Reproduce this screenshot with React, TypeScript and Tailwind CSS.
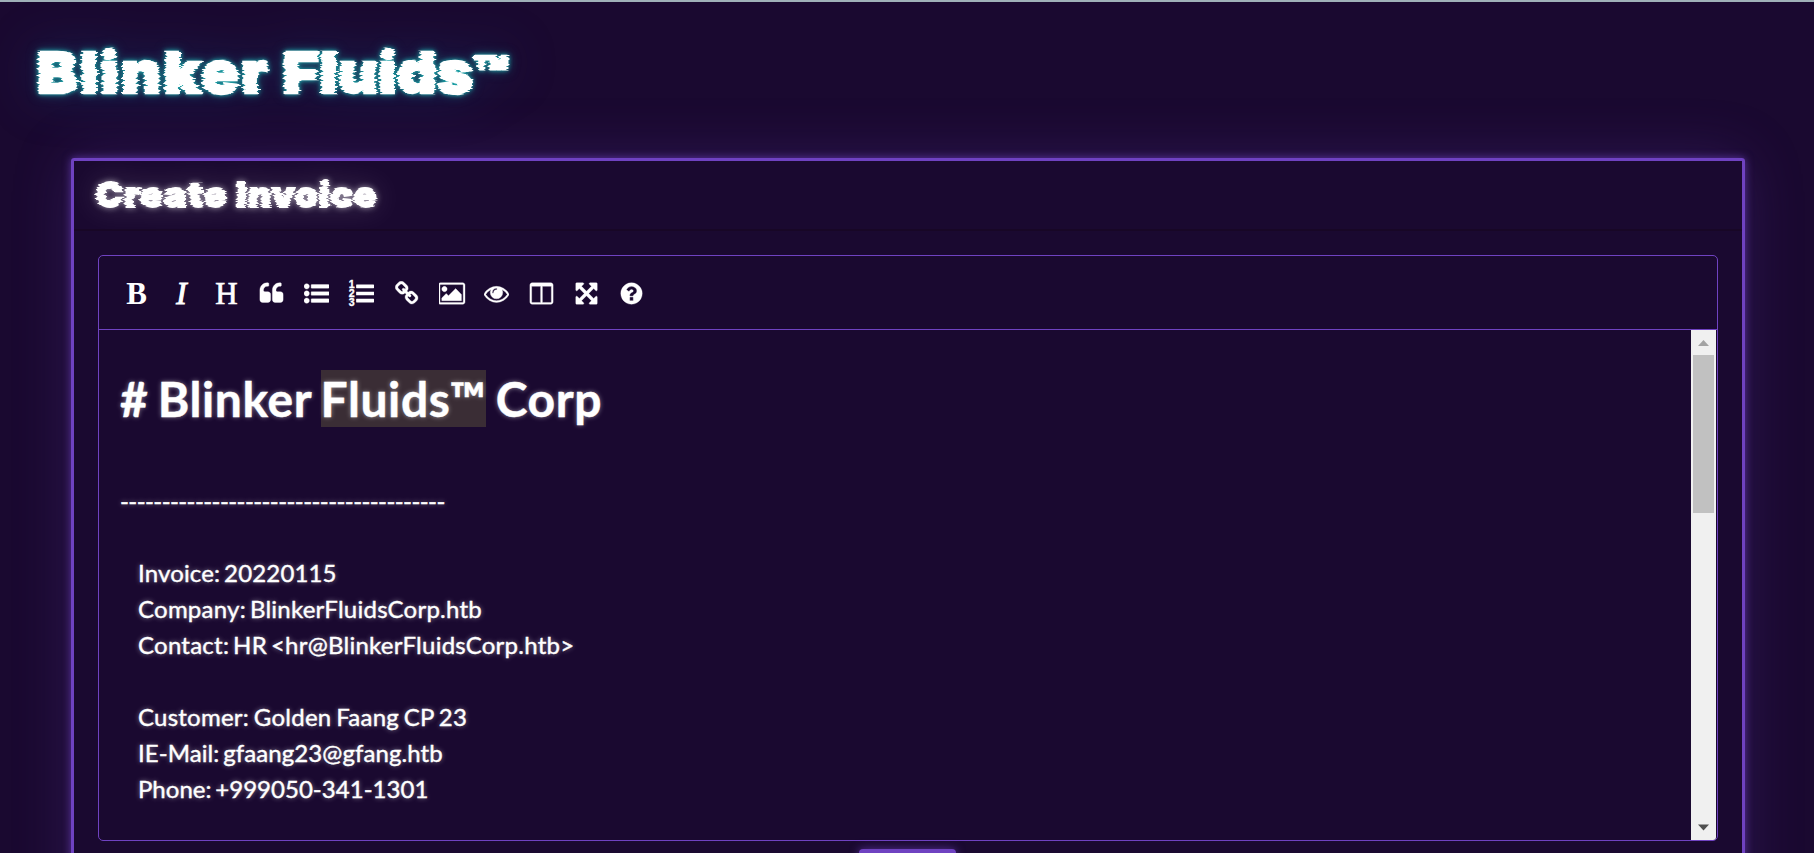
import type { ReactNode } from "react";

const BAR = "q0 13-9.5 22.5t-22.5 9.5h-1216q-13 0-22.5-9.5t-9.5-22.5v-192q0-13 9.5-22.5t22.5-9.5h1216q13 0 22.5 9.5t9.5 22.5z";
const DOT = "q0 80-56 136t-136 56-136-56-56-136 56-136 136-56 136 56 56 136z";
const BARS = `M1792 480${BAR}M1792 992${BAR}M1792 1504${BAR}`;

const PATHS = {
  quote: "M832 960v384q0 80-56 136t-136 56h-384q-80 0-136-56t-56-136v-704q0-104 40.5-198.5t109.5-163.5 163.5-109.5 198.5-40.5h64q26 0 45 19t19 45v128q0 26-19 45t-45 19h-64q-106 0-181 75t-75 181v32q0 40 28 68t68 28h224q80 0 136 56t56 136zm896 0v384q0 80-56 136t-136 56h-384q-80 0-136-56t-56-136v-704q0-104 40.5-198.5t109.5-163.5 163.5-109.5 198.5-40.5h64q26 0 45 19t19 45v128q0 26-19 45t-45 19h-64q-106 0-181 75t-75 181v32q0 40 28 68t68 28h224q80 0 136 56t56 136z",
  list: `M384 384${DOT}M384 896${DOT}M384 1408${DOT}${BARS}`,
  link: "M1456 1216q0-40-28-68l-208-208q-28-28-68-28-42 0-72 32 3 3 19 18.5t21.5 21.5 15 19 13 25.5 3.5 27.5q0 40-28 68t-68 28q-15 0-27.5-3.5t-25.5-13-19-15-21.5-21.5-18.5-19q-33 31-33 73 0 40 28 68l206 207q27 27 68 27 40 0 68-26l147-146q28-28 28-67zm-703-705q0-40-28-68l-206-207q-28-28-68-28-39 0-68 27l-147 146q-28 28-28 67 0 40 28 68l208 208q27 27 68 27 42 0 72-31-3-3-19-18.5t-21.5-21.5-15-19-13-25.5-3.5-27.5q0-40 28-68t68-28q15 0 27.5 3.5t25.5 13 19 15 21.5 21.5 18.5 19q33-31 33-73zm895 705q0 120-85 203l-147 146q-83 83-203 83-121 0-204-85l-206-207q-83-83-83-203 0-123 88-209l-88-88q-86 88-208 88-120 0-204-84l-208-208q-84-84-84-204t85-203l147-146q83-83 203-83 121 0 204 85l206 207q83 83 83 203 0 123-88 209l88 88q86-88 208-88 120 0 204 84l208 208q84 84 84 204z",
  image: "M576 576q0 80-56 136t-136 56-136-56-56-136 56-136 136-56 136 56 56 136zm1024 384v448h-1408v-192l320-320 160 160 512-512zm96-704h-1600q-13 0-22.5 9.5t-9.5 22.5v1216q0 13 9.5 22.5t22.5 9.5h1600q13 0 22.5-9.5t9.5-22.5v-1216q0-13-9.5-22.5t-22.5-9.5zm160 32v1216q0 66-47 113t-113 47h-1600q-66 0-113-47t-47-113v-1216q0-66 47-113t113-47h1600q66 0 113 47t47 113z",
  eye: "M1664 960q-152-236-381-353 61 104 61 225 0 185-131.5 316.5t-316.5 131.5-316.5-131.5-131.5-316.5q0-121 61-225-229 117-381 353 133 205 333.5 326.5t434.5 121.5 434.5-121.5 333.5-326.5zm-720-384q0-20-14-34t-34-14q-125 0-214.5 89.5t-89.5 214.5q0 20 14 34t34 14 34-14 14-34q0-86 61-147t147-61q20 0 34-14t14-34zm848 384q0 34-20 69-140 230-376.5 368.5t-499.5 138.5-499.5-139-376.5-368q-20-35-20-69t20-69q140-229 376.5-368t499.5-139 499.5 139 376.5 368q20 35 20 69z",
  columns: "M224 1536h608v-1152h-640v1120q0 13 9.5 22.5t22.5 9.5zm1376-32v-1120h-640v1152h608q13 0 22.5-9.5t9.5-22.5zm128-1216v1216q0 66-47 113t-113 47h-1344q-66 0-113-47t-47-113v-1216q0-66 47-113t113-47h1344q66 0 113 47t47 113z",
  expand: "M1411 541l-355 355 355 355 144-144q29-31 70-14 39 17 39 59v448q0 26-19 45t-45 19h-448q-42 0-59-40-17-39 14-69l144-144-355-355-355 355 144 144q31 30 14 69-17 40-59 40h-448q-26 0-45-19t-19-45v-448q0-42 40-59 39-17 69 14l144 144 355-355-355-355-144 144q-19 19-45 19-12 0-24-5-40-17-40-59v-448q0-26 19-45t45-19h448q42 0 59 40 17 39-14 69l-144 144 355 355 355-355-144-144q-31-30-14-69 17-40 59-40h448q26 0 45 19t19 45v448q0 42-39 59-13 5-25 5-26 0-45-19z",
  help: "M1024 1376v-192q0-14-9-23t-23-9h-192q-14 0-23 9t-9 23v192q0 14 9 23t23 9h192q14 0 23-9t9-23zm256-672q0-88-55.5-163t-138.5-116-170-41q-243 0-371 213-15 24 8 42l132 100q7 6 19 6 16 0 25-12 53-68 86-92 34-24 86-24 48 0 85.5 26t37.5 59q0 38-20 61t-68 45q-63 28-115.5 86.5t-52.5 125.5v36q0 14 9 23t23 9h192q14 0 23-9t9-23q0-19 21.5-49.5t54.5-49.5q32-18 49-28.5t46-35 44.5-48 28-60.5 12.5-81zm384 192q0 209-103 385.5t-279.5 279.5-385.5 103-385.5-103-279.5-279.5-103-385.5 103-385.5 279.5-279.5 385.5-103 385.5 103 279.5 279.5 103 385.5z",
};

function Icon({ d, wide }: { d: string; wide?: boolean }) {
  return (
    <svg viewBox={wide ? "0 0 1920 1792" : "0 0 1792 1792"} className={wide ? "ml-[2px] h-[25px] w-[27px]" : "size-[25px]"} fill="currentColor" stroke="currentColor" strokeWidth="24" fillRule="evenodd">
      <path d={d} />
    </svg>
  );
}

function Tool({ label, children }: { label: string; children: ReactNode }) {
  return (
    <button aria-label={label} className="flex h-[38px] w-[45px] items-center justify-center">
      {children}
    </button>
  );
}

function Toolbar() {
  return (
    <div className="flex h-[74px] items-center border-b border-[#6f42c1] pt-[2px] pl-[15px] text-white">
      <Tool label="Bold"><span className="font-['Liberation_Serif',serif] text-[31px] leading-none font-bold">B</span></Tool>
      <Tool label="Italic"><span className="font-['Liberation_Serif',serif] text-[31px] leading-none italic [-webkit-text-stroke:1.1px_white]">I</span></Tool>
      <Tool label="Heading"><span className="font-['Liberation_Serif',serif] text-[31px] leading-none [-webkit-text-stroke:0.7px_white]">H</span></Tool>
      <Tool label="Quote"><Icon d={PATHS.quote} /></Tool>
      <Tool label="Generic List"><Icon d={PATHS.list} /></Tool>
      <Tool label="Numbered List">
        <svg viewBox="0 0 1792 1792" className="size-[25px] overflow-visible" fill="currentColor">
          <path d={BARS} />
          <g className="font-['Liberation_Sans',sans-serif] text-[760px] font-bold" stroke="currentColor" strokeWidth="24">
            <text x="-20" y="470">1</text>
            <text x="-20" y="1140">2</text>
            <text x="-20" y="1800">3</text>
          </g>
        </svg>
      </Tool>
      <Tool label="Create Link"><span className="pl-[2px]"><Icon d={PATHS.link} /></span></Tool>
      <Tool label="Insert Image"><Icon d={PATHS.image} wide /></Tool>
      <Tool label="Toggle Preview"><Icon d={PATHS.eye} /></Tool>
      <Tool label="Toggle Side by Side"><Icon d={PATHS.columns} /></Tool>
      <Tool label="Toggle Fullscreen"><Icon d={PATHS.expand} /></Tool>
      <Tool label="Markdown Guide"><Icon d={PATHS.help} /></Tool>
    </div>
  );
}

function Scrollbar() {
  return (
    <div className="mr-px flex w-[25px] shrink-0 flex-col items-center rounded-br-[3px] bg-[#f0f0f0]">
      <svg viewBox="0 0 25 25" className="size-[25px] shrink-0"><path d="M12.5 10l5.5 6H7z" fill="#a3a3a3" /></svg>
      <div className="h-[158px] w-[21px] bg-[#c1c1c1]" />
      <svg viewBox="0 0 25 25" className="mt-auto size-[25px] shrink-0"><path d="M12.5 15.500l5.500-6H7z" fill="#505050" /></svg>
    </div>
  );
}

const INVOICE = [
  { text: "Invoice: 20220115", spacing: "tracking-[0.15px]" },
  { text: "Company: BlinkerFluidsCorp.htb", spacing: "tracking-[0.24px]" },
  { text: "Contact: HR <hr@BlinkerFluidsCorp.htb>", spacing: "tracking-[0.24px]" },
];
const CUSTOMER = [
  { text: "Customer: Golden Faang CP 23", spacing: "tracking-[0.24px] [word-spacing:-1.6px]" },
  { text: "IE-Mail: gfaang23@gfang.htb", spacing: "tracking-[0.08px]" },
  { text: "Phone: +999050-341-1301", spacing: "tracking-[0.02px]" },
];

export default function App() {
  return (
    <div className="flex h-[853px] flex-col overflow-hidden border-t-2 border-[#9fb0b8] bg-[#1a0930] font-['Lato',sans-serif] text-white">
      <svg className="absolute size-0" aria-hidden="true">
        <filter id="glitch" x="-5%" y="-20%" width="110%" height="140%">
          <feTurbulence type="fractalNoise" baseFrequency="0.012 0.42" numOctaves="2" seed="5" result="n" />
          <feColorMatrix in="n" type="matrix" values="1 0 0 0 0  0 0 0 0 0.5  0 0 0 0 0  0 0 0 0 1" result="m" colorInterpolationFilters="sRGB" />
          <feDisplacementMap in="SourceGraphic" in2="m" scale="13" xChannelSelector="R" yChannelSelector="G" colorInterpolationFilters="sRGB" />
        </filter>
      </svg>
      <header className="h-[156px] shrink-0 pt-[35px] pl-[40px]">
        <div className="[filter:drop-shadow(0_0_2px_#1fb5b5)_drop-shadow(0_0_5px_#1a7f8a80)_drop-shadow(0_0_24px_#17428a50)]">
          <h1 className="w-fit origin-left scale-x-[1.08] font-['Inter',sans-serif] text-[57px] leading-[72px] font-black tracking-[0.4px] whitespace-nowrap [-webkit-text-stroke:2.4px_white] [filter:url(#glitch)]">
            <span className="tracking-[2.1px]">Blinker</span> Fluids<span className="ml-[-1px] text-[51px]">™</span>
          </h1>
        </div>
      </header>
      <main className="mx-[71px] mr-[69px] flex h-[760px] shrink-0 flex-col rounded-[3px] border-[3px] border-[#6f42c1] shadow-[0_0_9px_#6f42c1bb,0_0_60px_#6f42c13c]">
        <div className="h-[70px] shrink-0 border-b-2 border-[#180726] pt-[11px] pl-[25px]">
          <div className="[filter:drop-shadow(0_0_3px_#ffffff90)_drop-shadow(0_0_14px_#ffffff28)]">
            <h2 className="w-fit origin-left scale-x-[1.08] font-['Inter',sans-serif] text-[34px] leading-[46px] font-black tracking-[0.9px] whitespace-nowrap [-webkit-text-stroke:1.8px_white] [filter:url(#glitch)]"><span className="tracking-[1.3px]">Create</span> Invoice</h2>
          </div>
        </div>
        <section className="mx-[24px] mt-[24px] flex h-[586px] shrink-0 flex-col rounded-[5px] border border-[#6f42c1]">
          <Toolbar />
          <div className="flex min-h-0 flex-1">
            <div className="flex-1 pt-[33px] pl-[21px] text-[24px] leading-[36px] [text-shadow:0_0_5px_#ffffff80]">
              <div className="h-[72px] text-[48px] leading-[72px] font-bold tracking-[0.6px] [word-spacing:-3px] whitespace-pre [-webkit-text-stroke:0.4px_white]"># Blinker <span className="bg-[#3a2d35]">Fluids™</span> Corp</div>
              <div className="mt-[48px] tracking-[-0.59px] whitespace-nowrap [-webkit-text-stroke:0.4px_white]">---------------------------------------</div>
              <div className="mt-[36px] pl-[18px] [word-spacing:-2.4px] [-webkit-text-stroke:0.4px_white]">
                {INVOICE.map((l) => <div key={l.text} className={l.spacing}>{l.text}</div>)}
                <div className="h-[36px]" />
                {CUSTOMER.map((l) => <div key={l.text} className={l.spacing}>{l.text}</div>)}
              </div>
            </div>
            <Scrollbar />
          </div>
        </section>
        <div className="mt-[8px] mr-[1px] h-[50px] w-[97px] shrink-0 self-center rounded-[4px] bg-[#6f42c1] shadow-[0_0_10px_#6f42c1aa]" />
      </main>
    </div>
  );
}
